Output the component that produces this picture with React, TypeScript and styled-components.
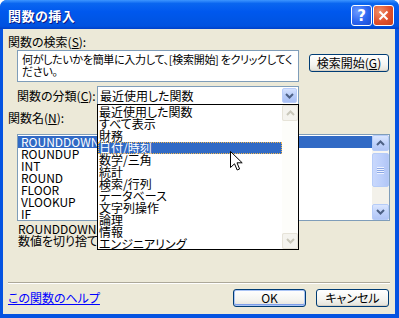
import React from "react";
import styled, { createGlobalStyle } from "styled-components";

const GlobalStyle = createGlobalStyle`
  html, body { margin: 0; padding: 0; background: #ffffff; }
  body {
    font-family: "Noto Sans CJK JP", "Noto Sans", sans-serif;
    font-size: 12px;
    font-feature-settings: "palt";
    color: #000;
  }
`;

const categories = [
  "最近使用した関数",
  "すべて表示",
  "財務",
  "日付/時刻",
  "数学/三角",
  "統計",
  "検索/行列",
  "データベース",
  "文字列操作",
  "論理",
  "情報",
  "エンジニアリング",
];

const functions = ["ROUNDDOWN", "ROUNDUP", "INT", "ROUND", "FLOOR", "VLOOKUP", "IF"];

type Dir = "up" | "down";

function Chevron({ dir, color }: { dir: Dir; color: string }) {
  const d = dir === "up" ? "M1 6 L4.5 2.5 L8 6" : "M1 2 L4.5 5.5 L8 2";
  return (
    <svg width="9" height="8" viewBox="0 0 9 8">
      <path d={d} fill="none" stroke={color} strokeWidth="2" />
    </svg>
  );
}

export default function App() {
  return (
    <>
      <GlobalStyle />
      <Window>
        <TitleBar>
          <TitleText>関数の挿入</TitleText>
          <TitleButtons>
            <CapButton $kind="help">?</CapButton>
            <CapButton $kind="close">
              <svg width="11" height="11" viewBox="0 0 11 11">
                <path d="M1.5 1.5 L9.5 9.5 M9.5 1.5 L1.5 9.5" stroke="#fff" strokeWidth="2" />
              </svg>
            </CapButton>
          </TitleButtons>
        </TitleBar>
        <Body>
          <Label>
            関数の検索(<u>S</u>):
          </Label>
          <SearchRow>
            <TextBox>
              <div>何がしたいかを簡単に入力して、[検索開始] をクリックしてく</div>
              <div>ださい。</div>
            </TextBox>
            <PushButton $width={80} $top={4}>
              検索開始(<u>G</u>)
            </PushButton>
          </SearchRow>
          <CategoryRow>
            <RowLabel>
              関数の分類(<u>C</u>):
            </RowLabel>
            <Combo>
              <ComboText>最近使用した関数</ComboText>
              <ComboArrow>
                <Chevron dir="down" color="#4d6185" />
              </ComboArrow>
              <DropList>
                <DropItems>
                  {categories.map((c, i) => (
                    <DropItem key={c} $selected={i === 3}>
                      {c}
                    </DropItem>
                  ))}
                </DropItems>
                <ScrollBar $width={16}>
                  <ScrollBtn $disabled>
                    <Chevron dir="up" color="#c9c7ba" />
                  </ScrollBtn>
                  <Track $light />
                  <ScrollBtn $disabled>
                    <Chevron dir="down" color="#c9c7ba" />
                  </ScrollBtn>
                </ScrollBar>
              </DropList>
            </Combo>
          </CategoryRow>
          <Label $top={7}>
            関数名(<u>N</u>):
          </Label>
          <ListBox>
            <ListItems>
              {functions.map((f, i) => (
                <ListItem key={f} $selected={i === 0}>
                  {f}
                </ListItem>
              ))}
            </ListItems>
            <ScrollBar $width={17}>
              <ScrollBtn>
                <Chevron dir="up" color="#4d6185" />
              </ScrollBtn>
              <Thumb>
                <Grip />
              </Thumb>
              <Track />
              <ScrollBtn>
                <Chevron dir="down" color="#4d6185" />
              </ScrollBtn>
            </ScrollBar>
          </ListBox>
          <Description>
            <div>ROUNDDOWN(数値,桁数)</div>
            <div>数値を切り捨てて指定された桁数にします。</div>
          </Description>
          <Separator />
          <Footer>
            <HelpLink>この関数のヘルプ</HelpLink>
            <FooterButtons>
              <PushButton $width={73} $default>
                OK
              </PushButton>
              <PushButton $width={73}>キャンセル</PushButton>
            </FooterButtons>
          </Footer>
        </Body>
        <Cursor width="13" height="20" viewBox="0 0 13 20">
          <path
            d="M0.5 0.5 L0.5 16.5 L4.5 12.8 L7.2 19 L9.6 18 L7 11.8 L12.2 11.8 Z"
            fill="#fff"
            stroke="#000"
            strokeWidth="1"
          />
        </Cursor>
      </Window>
    </>
  );
}

const Window = styled.div`
  position: relative;
  width: 399px;
  height: 318px;
  display: flex;
  flex-direction: column;
  background: #0553e1;
  border-radius: 7px 7px 0 0;
  overflow: hidden;
`;

const TitleBar = styled.div`
  height: 29px;
  flex: none;
  display: flex;
  align-items: center;
  justify-content: space-between;
  padding: 0 5px 0 8px;
  background: linear-gradient(
    to bottom,
    #3d95ff 0%,
    #0a66f0 12%,
    #0058ee 40%,
    #0055e5 70%,
    #0052e0 90%,
    #0040c8 100%
  );
`;

const TitleText = styled.div`
  color: #fff;
  font-size: 13px;
  font-weight: bold;
  letter-spacing: 0.5px;
  text-shadow: 1px 1px 0 #0a1883;
  margin-top: 1px;
`;

const TitleButtons = styled.div`
  display: flex;
  gap: 1px;
  margin-top: 2px;
`;

const CapButton = styled.div<{ $kind: "help" | "close" }>`
  width: 21px;
  height: 21px;
  box-sizing: border-box;
  border: 1px solid #fff;
  border-radius: 3px;
  display: flex;
  align-items: center;
  justify-content: center;
  color: #fff;
  font-family: "DejaVu Sans", sans-serif;
  font-weight: bold;
  font-size: 15px;
  background: ${(p) =>
    p.$kind === "help"
      ? "radial-gradient(circle at 30% 30%, #6d9bff 0%, #2a64f0 55%, #1a4bd0 100%)"
      : "radial-gradient(circle at 30% 30%, #f0906a 0%, #e0502c 55%, #c8401c 100%)"};
`;

const Body = styled.div`
  flex: 1;
  margin: 0 4px 4px 3px;
  padding: 0 5px;
  background: #ece9d8;
  display: flex;
  flex-direction: column;
  min-height: 0;
`;

const Label = styled.div<{ $top?: number }>`
  line-height: 12px;
  height: 12px;
  margin-top: ${(p) => p.$top ?? 7}px;
  white-space: nowrap;
`;

const SearchRow = styled.div`
  display: flex;
  align-items: flex-start;
  margin-top: 2px;
  padding-left: 9px;
`;

const TextBox = styled.div`
  width: 282px;
  height: 32px;
  box-sizing: border-box;
  border: 1px solid #7f9db9;
  background: #fff;
  padding: 2px 0 0 4px;
  font-size: 11px;
  line-height: 12px;
  letter-spacing: -0.3px;
  white-space: nowrap;
  margin-right: 10px;
  overflow: hidden;
`;

const PushButton = styled.div<{ $width: number; $top?: number; $default?: boolean }>`
  width: ${(p) => p.$width}px;
  height: 18px;
  margin-top: ${(p) => p.$top ?? 0}px;
  box-sizing: border-box;
  border: 1px solid #003c74;
  border-radius: 3px;
  background: linear-gradient(to bottom, #ffffff 0%, #f4f4f0 60%, #e3e2d9 100%);
  box-shadow: ${(p) =>
    p.$default
      ? "inset 0 0 0 1px #aac4f5, inset 0 -1px 0 1px #7d9ee9"
      : "inset 0 -1px 0 #d6d0c5"};
  display: flex;
  align-items: center;
  justify-content: center;
  line-height: 12px;
  white-space: nowrap;
`;

const CategoryRow = styled.div`
  display: flex;
  align-items: center;
  margin-top: 4px;
  padding-left: 9px;
`;

const RowLabel = styled.div`
  width: 80px;
  line-height: 12px;
  white-space: nowrap;
`;

const Combo = styled.div`
  position: relative;
  width: 202px;
  height: 19px;
  box-sizing: border-box;
  border: 1px solid #7f9db9;
  background: #fff;
  display: flex;
  align-items: center;
  justify-content: space-between;
`;

const ComboText = styled.div`
  padding-left: 2px;
  line-height: 12px;
`;

const ComboArrow = styled.div`
  width: 15px;
  height: 15px;
  margin-right: 1px;
  box-sizing: border-box;
  border: 1px solid #b9cdf9;
  border-radius: 2px;
  background: linear-gradient(to bottom, #d6e3ff 0%, #b9cdf9 50%, #a9c0f5 100%);
  display: flex;
  align-items: center;
  justify-content: center;
`;

const DropList = styled.div`
  position: absolute;
  left: -1px;
  top: 100%;
  width: 202px;
  height: 146px;
  box-sizing: border-box;
  border: 1px solid #000;
  background: #fff;
  display: flex;
  z-index: 5;
`;

const DropItems = styled.div`
  flex: 1;
  display: flex;
  flex-direction: column;
  padding-top: 1px;
`;

const DropItem = styled.div<{ $selected?: boolean }>`
  height: 12px;
  line-height: 12px;
  padding-left: 1px;
  white-space: nowrap;
  background: ${(p) => (p.$selected ? "#316ac5" : "transparent")};
  color: ${(p) => (p.$selected ? "#fff" : "#000")};
  outline: ${(p) => (p.$selected ? "1px dotted #f2b84e" : "none")};
  outline-offset: -1px;
`;

const ScrollBar = styled.div<{ $width: number }>`
  width: ${(p) => p.$width}px;
  flex: none;
  display: flex;
  flex-direction: column;
  background: #f7f6f1;
`;

const ScrollBtn = styled.div<{ $disabled?: boolean }>`
  height: 16px;
  flex: none;
  box-sizing: border-box;
  border: 1px solid ${(p) => (p.$disabled ? "#e6e3d8" : "#b6ccf8")};
  border-radius: 2px;
  background: ${(p) =>
    p.$disabled
      ? "#f4f3ee"
      : "linear-gradient(to bottom, #dbe6fe 0%, #c1d3fb 50%, #b2c6f6 100%)"};
  display: flex;
  align-items: center;
  justify-content: center;
`;

const Track = styled.div<{ $light?: boolean }>`
  flex: 1;
  background: ${(p) => (p.$light ? "#fdfdfa" : "#f3f1ea")};
`;

const Thumb = styled.div`
  height: 34px;
  margin-top: 2px;
  flex: none;
  box-sizing: border-box;
  border: 1px solid #b6ccf8;
  border-radius: 2px;
  background: linear-gradient(to right, #c9d8fc 0%, #bccffb 60%, #b2c6f6 100%);
  display: flex;
  align-items: center;
  justify-content: center;
`;

const Grip = styled.div`
  width: 7px;
  height: 7px;
  background: repeating-linear-gradient(
    to bottom,
    #eef3ff 0px,
    #eef3ff 1px,
    #8ca8e6 1px,
    #8ca8e6 2px
  );
`;

const ListBox = styled.div`
  width: 373px;
  height: 87px;
  margin-top: 10px;
  margin-left: 9px;
  box-sizing: border-box;
  border: 1px solid #7f9db9;
  background: #fff;
  display: flex;
`;

const ListItems = styled.div`
  flex: 1;
  padding-top: 1px;
  display: flex;
  flex-direction: column;
`;

const ListItem = styled.div<{ $selected?: boolean }>`
  height: 12px;
  line-height: 12px;
  padding-left: 3px;
  background: ${(p) => (p.$selected ? "#316ac5" : "transparent")};
  color: ${(p) => (p.$selected ? "#fff" : "#000")};
`;

const Description = styled.div`
  margin-top: 2px;
  padding-left: 10px;
  line-height: 12px;
  white-space: nowrap;
`;

const Separator = styled.div`
  margin-top: auto;
  height: 0;
  border-top: 1px solid #aca899;
  border-bottom: 1px solid #fff;
`;

const Footer = styled.div`
  display: flex;
  align-items: center;
  justify-content: space-between;
  margin-top: 5px;
  margin-bottom: 7px;
  height: 18px;
`;

const HelpLink = styled.a`
  color: #0000ff;
  text-decoration: underline;
  line-height: 12px;
  cursor: pointer;
`;

const FooterButtons = styled.div`
  display: flex;
  gap: 10px;
  margin-right: 1px;
`;

const Cursor = styled.svg`
  position: absolute;
  left: 230px;
  top: 151px;
  z-index: 10;
`;
